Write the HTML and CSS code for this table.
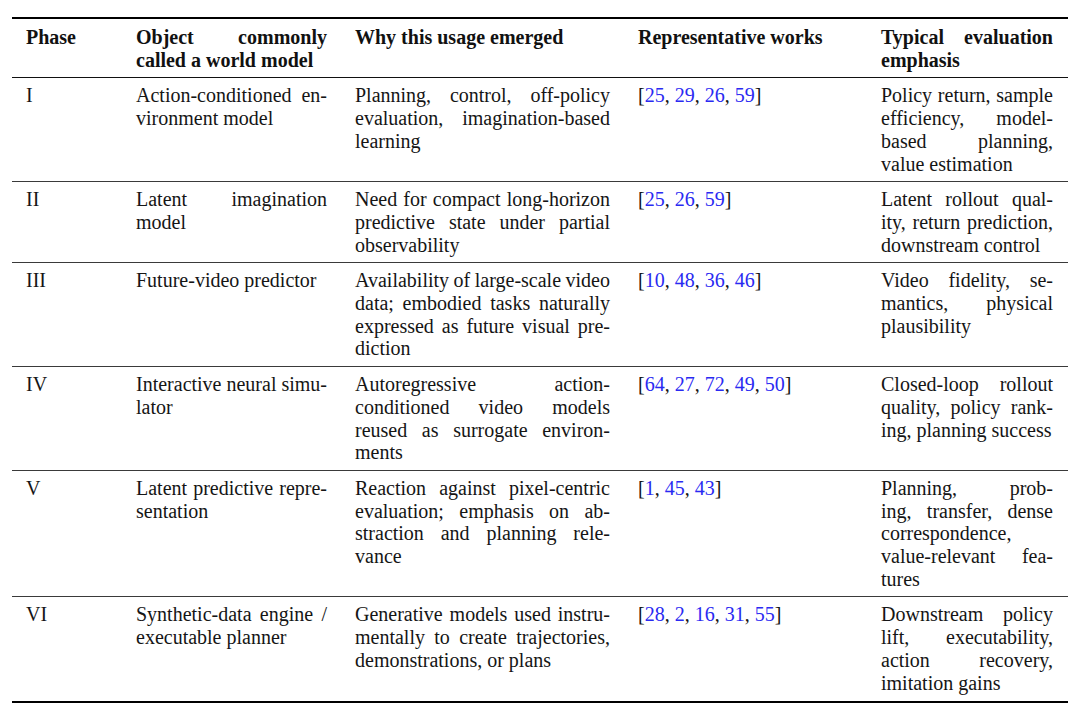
FILE: index.html
```html
<!DOCTYPE html>
<html lang="en">
<head>
<meta charset="utf-8">
<title>World model phases</title>
<link rel="stylesheet" href="styles.css">
</head>
<body>
<div class="page">
<table class="tbl">
<colgroup>
<col class="c1"><col class="c2"><col class="c3"><col class="c4"><col class="c5">
</colgroup>
<thead>
<tr>
<th><span class="l">Phase</span></th>
<th><span class="l j">Object commonly</span><span class="l">called a world model</span></th>
<th><span class="l">Why this usage emerged</span></th>
<th><span class="l">Representative works</span></th>
<th><span class="l j">Typical evaluation</span><span class="l">emphasis</span></th>
</tr>
</thead>
<tbody>
<tr>
<td><span class="l">I</span></td>
<td><span class="l j">Action-conditioned en-</span><span class="l">vironment model</span></td>
<td><span class="l j">Planning, control, off-policy</span><span class="l j">evaluation, imagination-based</span><span class="l">learning</span></td>
<td><span class="l">[<a class="ref">25</a>, <a class="ref">29</a>, <a class="ref">26</a>, <a class="ref">59</a>]</span></td>
<td><span class="l j">Policy return, sample</span><span class="l j">efficiency, model-</span><span class="l j">based planning,</span><span class="l">value estimation</span></td>
</tr>
<tr>
<td><span class="l">II</span></td>
<td><span class="l j">Latent imagination</span><span class="l">model</span></td>
<td><span class="l j">Need for compact long-horizon</span><span class="l j">predictive state under partial</span><span class="l">observability</span></td>
<td><span class="l">[<a class="ref">25</a>, <a class="ref">26</a>, <a class="ref">59</a>]</span></td>
<td><span class="l j">Latent rollout qual-</span><span class="l j">ity, return prediction,</span><span class="l">downstream control</span></td>
</tr>
<tr>
<td><span class="l">III</span></td>
<td><span class="l">Future-video predictor</span></td>
<td><span class="l j">Availability of large-scale video</span><span class="l j">data; embodied tasks naturally</span><span class="l j">expressed as future visual pre-</span><span class="l">diction</span></td>
<td><span class="l">[<a class="ref">10</a>, <a class="ref">48</a>, <a class="ref">36</a>, <a class="ref">46</a>]</span></td>
<td><span class="l j">Video fidelity, se-</span><span class="l j">mantics, physical</span><span class="l">plausibility</span></td>
</tr>
<tr>
<td><span class="l">IV</span></td>
<td><span class="l j">Interactive neural simu-</span><span class="l">lator</span></td>
<td><span class="l j">Autoregressive action-</span><span class="l j">conditioned video models</span><span class="l j">reused as surrogate environ-</span><span class="l">ments</span></td>
<td><span class="l">[<a class="ref">64</a>, <a class="ref">27</a>, <a class="ref">72</a>, <a class="ref">49</a>, <a class="ref">50</a>]</span></td>
<td><span class="l j">Closed-loop rollout</span><span class="l j">quality, policy rank-</span><span class="l">ing, planning success</span></td>
</tr>
<tr>
<td><span class="l">V</span></td>
<td><span class="l j">Latent predictive repre-</span><span class="l">sentation</span></td>
<td><span class="l j">Reaction against pixel-centric</span><span class="l j">evaluation; emphasis on ab-</span><span class="l j">straction and planning rele-</span><span class="l">vance</span></td>
<td><span class="l">[<a class="ref">1</a>, <a class="ref">45</a>, <a class="ref">43</a>]</span></td>
<td><span class="l j">Planning, prob-</span><span class="l j">ing, transfer, dense</span><span class="l">correspondence,</span><span class="l j">value-relevant fea-</span><span class="l">tures</span></td>
</tr>
<tr>
<td><span class="l">VI</span></td>
<td><span class="l j">Synthetic-data engine /</span><span class="l">executable planner</span></td>
<td><span class="l j">Generative models used instru-</span><span class="l j">mentally to create trajectories,</span><span class="l">demonstrations, or plans</span></td>
<td><span class="l">[<a class="ref">28</a>, <a class="ref">2</a>, <a class="ref">16</a>, <a class="ref">31</a>, <a class="ref">55</a>]</span></td>
<td><span class="l j">Downstream policy</span><span class="l j">lift, executability,</span><span class="l j">action recovery,</span><span class="l">imitation gains</span></td>
</tr>
</tbody>
</table>
</div>
</body>
</html>
```

FILE: styles.css
```css
html, body {
  margin: 0;
  padding: 0;
  background: #ffffff;
}

.page {
  padding: 17px 12px 0 12px;
  font-family: "Liberation Serif", "Times New Roman", serif;
  font-size: 20px;
  line-height: 22.7px;
  color: #151515;
}

.tbl {
  width: 1056px;
  border-collapse: collapse;
  table-layout: fixed;
}

.c1 { width: 110px; }
.c2 { width: 219px; }
.c3 { width: 283px; }
.c4 { width: 243px; }
.c5 { width: 201px; }

.tbl th,
.tbl td {
  padding: 6px 14px 6px 14px;
  vertical-align: top;
  text-align: left;
}

.tbl th:last-child,
.tbl td:last-child {
  padding-right: 15px;
}

.tbl th {
  font-weight: bold;
  color: #111111;
  padding-top: 7px;
  padding-bottom: 6px;
}

.tbl thead tr {
  border-top: 2px solid #000000;
  border-bottom: 1.5px solid #111111;
}

.tbl tbody tr {
  border-top: 1px solid #3a3a3a;
}

.tbl tbody tr:first-child {
  border-top: 1.5px solid #111111;
}

.tbl tbody tr:last-child {
  border-bottom: 2px solid #000000;
}

.tbl tbody tr:last-child td {
  padding-bottom: 7px;
}

.l {
  display: block;
}

.j {
  text-align: justify;
  text-align-last: justify;
  word-spacing: -4px;
}

.ref {
  color: #2a2af2;
  text-decoration: none;
}
```
